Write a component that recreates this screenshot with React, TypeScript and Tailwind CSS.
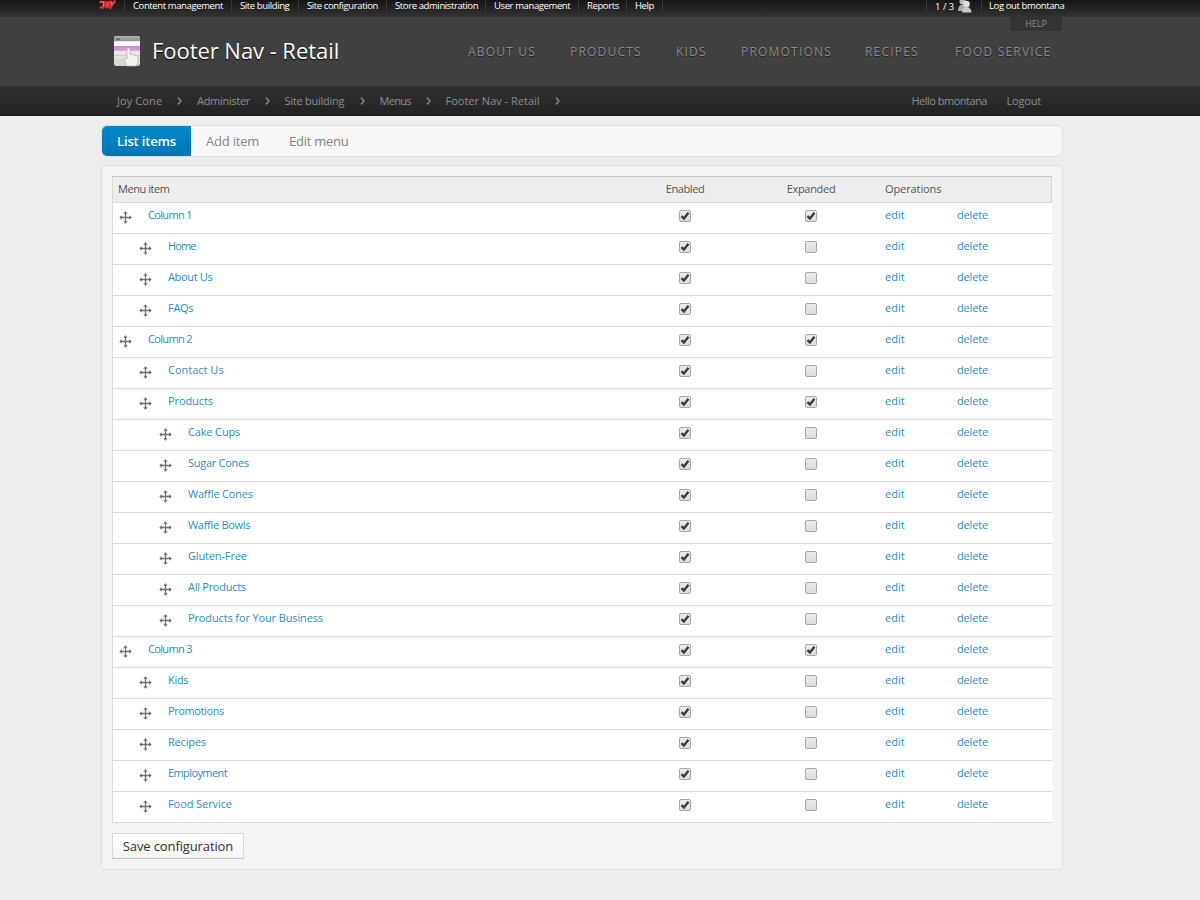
import React from "react";

const topLeft: { label: string; w: string }[] = [
  { label: "Content management", w: "w-[107px]" },
  { label: "Site building", w: "w-[67px]" },
  { label: "Site configuration", w: "w-[88px]" },
  { label: "Store administration", w: "w-[99px]" },
  { label: "User management", w: "w-[93px]" },
  { label: "Reports", w: "w-[48px]" },
  { label: "Help", w: "w-[36px]" },
];

const primary: { label: string; w: string }[] = [
  { label: "ABOUT US", w: "w-[102px]" },
  { label: "PRODUCTS", w: "w-[106px]" },
  { label: "KIDS", w: "w-[65px]" },
  { label: "PROMOTIONS", w: "w-[124px]" },
  { label: "RECIPES", w: "w-[90px]" },
  { label: "FOOD SERVICE", w: "w-[108px]" },
];

const crumbs: { label: string; w: string }[] = [
  { label: "Joy Cone", w: "w-[60px] tracking-[0.1px]" },
  { label: "Administer", w: "w-[67.5px] tracking-[-0.3px]" },
  { label: "Site building", w: "w-[75px] tracking-[-0.25px]" },
  { label: "Menus", w: "w-[46px] tracking-[-0.7px]" },
  { label: "Footer Nav - Retail", w: "w-[109px]" },
];

const rows: { label: string; depth: 0 | 1 | 2; expanded?: boolean; fit: string }[] = [
  { label: "Column 1", depth: 0, expanded: true, fit: "tracking-[-0.65px]" },
  { label: "Home", depth: 1, fit: "tracking-[-0.9px]" },
  { label: "About Us", depth: 1, fit: "tracking-[-0.35px]" },
  { label: "FAQs", depth: 1, fit: "tracking-[-0.3px]" },
  { label: "Column 2", depth: 0, expanded: true, fit: "tracking-[-0.65px]" },
  { label: "Contact Us", depth: 1, fit: "tracking-[0px]" },
  { label: "Products", depth: 1, expanded: true, fit: "tracking-[-0.1px]" },
  { label: "Cake Cups", depth: 2, fit: "tracking-[-0.15px]" },
  { label: "Sugar Cones", depth: 2, fit: "tracking-[-0.27px]" },
  { label: "Waffle Cones", depth: 2, fit: "tracking-[-0.2px]" },
  { label: "Waffle Bowls", depth: 2, fit: "tracking-[-0.3px]" },
  { label: "Gluten-Free", depth: 2, fit: "tracking-[-0.15px]" },
  { label: "All Products", depth: 2, fit: "tracking-[-0.27px]" },
  { label: "Products for Your Business", depth: 2, fit: "tracking-[-0.13px]" },
  { label: "Column 3", depth: 0, expanded: true, fit: "tracking-[-0.65px]" },
  { label: "Kids", depth: 1, fit: "tracking-[-0.3px]" },
  { label: "Promotions", depth: 1, fit: "tracking-[-0.4px]" },
  { label: "Recipes", depth: 1, fit: "tracking-[-0.2px]" },
  { label: "Employment", depth: 1, fit: "tracking-[-0.6px]" },
  { label: "Food Service", depth: 1, fit: "tracking-[-0.08px]" },
];

const indent = ["pl-[6px]", "pl-[26px]", "pl-[46px]"];

function MoveIcon() {
  return (
    <svg width="13" height="13" viewBox="0 0 13 13" className="mt-2 shrink-0">
      <path d="M6.5 1v11M1 6.5h11" stroke="#707070" strokeWidth="1.3" fill="none" />
      <path
        d="M6.5 0.300L8.700 2.800H4.300zM6.500 12.700L8.700 10.200H4.300zM.3 6.500L2.800 4.300v4.400zM12.700 6.500L10.200 4.300v4.400z"
        fill="#707070"
      />
    </svg>
  );
}

function Check({ on }: { on?: boolean }) {
  return (
    <svg width="12" height="12" viewBox="0 0 12 12" className="mt-[7px]">
      <defs>
        <linearGradient id="box" x1="0" y1="0" x2="0" y2="1">
          <stop offset="0" stopColor="#ededed" />
          <stop offset="1" stopColor="#dcdcdc" />
        </linearGradient>
      </defs>
      <rect x="0.5" y="0.5" width="11" height="11" rx="1.5" fill="url(#box)" stroke="#a8a8a8" />
      {on && <path d="M2.500 6.200L4.900 8.500L9.500 2.700" stroke="#3a3a3a" strokeWidth="2.300" fill="none" />}
    </svg>
  );
}

function JoyLogo() {
  return (
    <svg width="17" height="12" viewBox="0 0 17 12" className="mr-2 shrink-0">
      <g fill="none" strokeLinecap="round">
        <path d="M1.500 2h4l-1 4.500q-.8 2-2.500.8M8.700 2q-2.500 1.500-1.400 5q3.200.4 3.200-3.200q-.2-1.800-1.800-1.800M11.500 1.500l1.200 3.500l3-3.500M13.500 4.500l-2.500 3.500" stroke="#d42a35" strokeWidth="2.600" />
        <path d="M2 1.800h3l-1 4.500M8.500 3.200l-.4 2.600M12 2l1 2.500l2-2.700" stroke="#f0a060" strokeWidth="0.7" />
      </g>
    </svg>
  );
}

function MenuPageIcon() {
  return (
    <svg width="28" height="32" viewBox="0 0 28 32" className="shrink-0">
      <defs>
        <linearGradient id="page" x1="0" y1="0" x2="0" y2="1">
          <stop offset="0" stopColor="#ffffff" />
          <stop offset="1" stopColor="#d4d4d4" />
        </linearGradient>
        <linearGradient id="bar" x1="0" y1="0" x2="0" y2="1">
          <stop offset="0" stopColor="#b4b4b4" />
          <stop offset="1" stopColor="#8c8c8c" />
        </linearGradient>
        <linearGradient id="pink" x1="0" y1="0" x2="0" y2="1">
          <stop offset="0" stopColor="#c98acb" />
          <stop offset="1" stopColor="#dba5dc" />
        </linearGradient>
      </defs>
      <rect x="1" y="1" width="26" height="30" rx="2.500" fill="url(#page)" />
      <path d="M1 6.500V3.500A2.500 2.500 0 0 1 3.500 1h21A2.500 2.500 0 0 1 27 3.500v3z" fill="url(#bar)" />
      <path d="M3 4h4" stroke="#666" strokeWidth="1.500" />
      <rect x="1" y="6.500" width="26" height="4.500" fill="#fff" />
      <rect x="1" y="11" width="26" height="5" fill="url(#pink)" />
      <path d="M1 20.500h26M1 25.500h26" stroke="#cfcfcf" />
      <path
        d="M13.500 31l-2-5.500c-1-2 1-3 2.500-1.200V14.500c0-2 3-2 3 0v5c1-1 2.500-.6 2.700.6 1-.8 2.400-.4 2.600.8 1.300-.6 2.700 0 2.700 1.600v4l-1.500 4.500z"
        fill="#f3f3f3"
        stroke="#b4b4b4"
        strokeWidth="0.8"
      />
    </svg>
  );
}

function Chevron() {
  return (
    <svg width="5" height="8" viewBox="0 0 5 8">
      <path d="M1 .5L3.900 4L1 7.500" stroke="#858585" strokeWidth="1.500" fill="none" />
    </svg>
  );
}

export default function App() {
  return (
    <div className="h-[900px] w-[1200px] overflow-hidden bg-[#eeeeee] font-['Open_Sans','Noto_Sans',sans-serif] text-[11px] leading-[14px]">
      <header className="h-[116px] border-b-2 border-[#1f1d1f] bg-[#404040]">
        <div className="h-[17px] bg-linear-to-b from-[#151515] to-[#333333]">
          <div className="flex h-3 pl-[99px] text-[9.5px] font-medium leading-[12px] text-white">
            <JoyLogo />
            {topLeft.map((t) => (
              <div key={t.label} className={`shrink-0 border-l border-[#383838] pl-2 tracking-[-0.39px] whitespace-nowrap ${t.w}`}>
                <span>{t.label}</span>
              </div>
            ))}
            <div className="w-[264px] shrink-0 border-l border-[#383838]" />
            <div className="flex w-[55px] shrink-0 border-l border-[#383838] pl-2">
              <span className="mt-px w-[22px] shrink-0">1 / 3</span>
              <svg width="16" height="13" viewBox="0 0 16 13" className="shrink-0">
                <circle cx="5.500" cy="1.500" r="3" fill="#bdbdbd" />
                <path d="M1 11q0-6.500 4.500-6.500T10 11z" fill="#a8a8a8" />
                <circle cx="9.500" cy="4" r="3.300" fill="#e2e2e2" />
                <path d="M5 12.500q0-5.500 4.500-5.500t5 5.500z" fill="#c8c8c8" />
              </svg>
            </div>
            <span className="border-l border-[#383838] pl-[7px] tracking-[-0.39px] whitespace-nowrap">Log out bmontana</span>
          </div>
        </div>
        <div className="flex h-[14px] justify-end pr-[138px]">
          <div className="h-[14px] w-[52px] rounded-b-[2px] bg-[#333333] text-center text-[9px] text-[#8c8c8c]">HELP</div>
        </div>
        <div className="flex h-[55px] pl-[113px]">
          <div className="mt-1"><MenuPageIcon /></div>
          <h1 className="ml-[11px] mt-[3px] w-[316px] shrink-0 whitespace-nowrap text-[22px] leading-[32px] text-white [text-shadow:0_1px_1px_#000]">
            <span className="tracking-[-0.05px]">Footer Nav - Retail</span>
          </h1>
          <nav className="mt-[14px] flex text-[12px] tracking-[1.2px] text-[#8a8a8a] [text-shadow:0_1px_0_#222]">
            {primary.map((p) => (
              <div key={p.label} className={`shrink-0 whitespace-nowrap ${p.w}`}><span>{p.label}</span></div>
            ))}
          </nav>
        </div>
        <div className="flex h-[28px] items-center bg-linear-to-b from-[#303030] to-[#242424] pt-[2px] pl-[117px] text-[#8c8c8c]">
          {crumbs.map((c) => (
            <div key={c.label} className="mr-[15px] flex shrink-0 items-center whitespace-nowrap">
              <span className={`shrink-0 ${c.w}`}>{c.label}</span>
              <Chevron />
            </div>
          ))}
          <span className="ml-[337px] w-[95px] shrink-0 tracking-[-0.5px] whitespace-nowrap">Hello bmontana</span>
          <span className="tracking-[-0.2px]">Logout</span>
        </div>
      </header>

      <main className="ml-[101px] mt-[9px] w-[962px]">
        <div className="flex h-8 overflow-hidden rounded-[6px] border border-[#e0e0e0] bg-[#f8f8f8] text-[13px] leading-[31px] text-[#858585]">
          <div className="w-[89px] bg-linear-to-b from-[#0088cc] to-[#0077b3] pl-[15px] font-semibold tracking-[-0.15px] whitespace-nowrap text-white"><span>List items</span></div>
          <div className="w-[83px] pl-[15px] tracking-[-0.2px] whitespace-nowrap"><span>Add item</span></div>
          <div className="pl-[15px] tracking-[-0.25px] whitespace-nowrap"><span>Edit menu</span></div>
        </div>

        <section className="mt-2 h-[705px] rounded-[4px] border border-[#e0e0e0] bg-[#f4f4f4] px-[10px] pt-[10px]">
          <div className="flex h-[27px] border border-t-[#c8c8c8] border-[#d8d8d8] bg-[#eeeeee] leading-[23px] text-[#555]">
            <div className="w-[509px] pl-[5px] tracking-[-0.45px]"><span>Menu item</span></div>
            <div className="w-[126px] text-center tracking-[-0.4px]"><span>Enabled</span></div>
            <div className="w-[126px] text-center tracking-[-0.3px]"><span>Expanded</span></div>
            <div className="pl-[11px] tracking-[-0.1px]"><span>Operations</span></div>
          </div>
          {rows.map((r) => (
            <div key={r.label} className="flex h-[31px] border-b border-l border-[#dcdcdc] bg-white text-[#2a8fc8]">
              <div className={`flex w-[509px] ${indent[r.depth]}`}>
                <MoveIcon />
                <span className={`ml-[16px] mt-[5px] h-[14px] ${r.fit}`}>{r.label}</span>
              </div>
              <div className="flex w-[126px] justify-center"><Check on /></div>
              <div className="flex w-[126px] justify-center"><Check on={r.expanded} /></div>
              <div className="mt-[5px] w-[83px] pl-[11px]"><span>edit</span></div>
              <div className="mt-[5px] tracking-[-0.15px]"><span>delete</span></div>
            </div>
          ))}
          <button className="mt-[10px] block h-[26px] w-[132px] border border-[#d8d8d8] border-b-[#c4c4c4] bg-linear-to-b from-white to-[#f5f5f5] text-[13px] tracking-[-0.12px] whitespace-nowrap text-[#333]">
            <span>Save configuration</span>
          </button>
        </section>
      </main>
    </div>
  );
}
